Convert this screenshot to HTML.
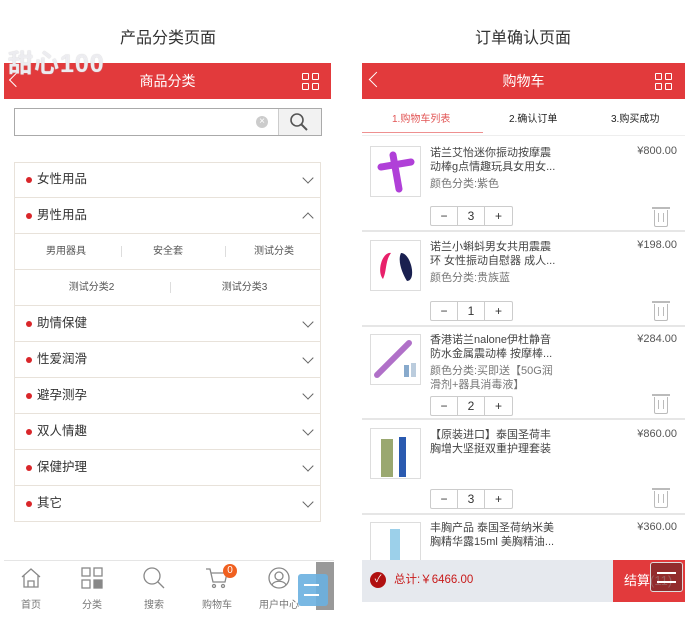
<!DOCTYPE html>
<html><head><meta charset="utf-8"><style>
*{margin:0;padding:0;box-sizing:border-box}
body{width:690px;height:637px;background:#fff;position:relative;overflow:hidden;font-family:"Liberation Sans","Noto Sans CJK SC",sans-serif;color:#333}
.a{position:absolute}
.title{font-size:16px;color:#333;top:24px}
.bar{background:#e23a3c;height:36px;top:63px;color:#fff;font-size:14px;text-align:center;line-height:36px}
.grid{position:absolute;width:17px;height:17px;top:10px}
.grid i{position:absolute;width:7px;height:7px;border:1.5px solid #fff;border-radius:1px}
.row{position:absolute;left:14px;width:307px;height:36px;border:1px solid #e8e2da;border-top:none;font-size:12.5px;line-height:35px;padding-left:22px;color:#333}
.row:before{content:"";position:absolute;left:11px;top:15px;width:6px;height:6px;border-radius:50%;background:#d9262a}
.chev{position:absolute;right:8px;top:12px;width:8px;height:8px;border-right:1.3px solid #666;border-bottom:1.3px solid #666;transform:rotate(45deg)}
.sub{position:absolute;left:14px;width:307px;height:36px;border:1px solid #e8e2da;border-top:none;font-size:10px;color:#555;line-height:35px}
.sub span{position:absolute;text-align:center}
.sep{position:absolute;top:12px;width:1px;height:11px;background:#ddd}
.nav{position:absolute;top:596px;font-size:10px;color:#777;text-align:center;width:40px}
.it{position:absolute;left:430px;font-size:11px;line-height:14px;color:#444;white-space:nowrap}
.clr{color:#777}
.pr{position:absolute;right:13px;font-size:11px;color:#555}
.img{position:absolute;left:370px;width:51px;height:51px;border:1px solid #ddd;background:#fff}
.qty{position:absolute;left:430px;width:83px;height:20px;border:1px solid #ccc;border-radius:2px;font-size:12px}
.qty span{position:absolute;top:0;height:18px;line-height:18px;text-align:center;width:27px}
.qty .m{left:0;border-right:1px solid #ccc}.qty .n{left:27px;border-right:1px solid #ccc}.qty .p{left:54px}
.hr{position:absolute;left:362px;width:323px;height:2px;background:#e6e6e6}
.tr{position:absolute;left:654px;width:14px;height:17px;border:1.3px solid #bbb;border-top:none;border-radius:0 0 2px 2px}
.tr:before{content:"";position:absolute;left:-3px;top:-3px;width:18px;height:2px;background:#bbb}
.tr:after{content:"";position:absolute;left:3px;top:3px;width:4px;height:9px;border-left:1px solid #bbb;border-right:1px solid #bbb}
</style></head><body>
<!-- LEFT -->
<div class="a title" style="left:120px">产品分类页面</div>
<div class="a bar" style="left:4px;width:327px">商品分类
<div class="a" style="left:7px;top:12px;width:10px;height:10px;border-left:1.3px solid #fff;border-bottom:1.3px solid #fff;transform:rotate(45deg)"></div>
<div class="grid" style="left:298px"><i style="left:0;top:0"></i><i style="left:10px;top:0"></i><i style="left:0;top:10px"></i><i style="left:10px;top:10px"></i></div></div>
<div class="a" style="left:8px;top:49px;font-size:25px;font-weight:bold;color:rgba(242,242,246,0.9);text-shadow:0 0 1px #bbb;letter-spacing:1px;line-height:30px">甜心100</div>
<div class="a" style="left:14px;top:108px;width:308px;height:28px;border:1px solid #aaa;background:#fff"></div>
<div class="a" style="left:278px;top:109px;width:43px;height:26px;background:#f2f2f2;border-left:1px solid #ccc"></div>
<div class="a" style="left:256px;top:116px;width:12px;height:12px;border-radius:50%;background:#ccc;color:#fff;font-size:10px;line-height:12px;text-align:center">×</div>
<svg class="a" style="left:289px;top:112px" width="20" height="20" viewBox="0 0 20 20"><circle cx="8" cy="8" r="6" fill="none" stroke="#555" stroke-width="1.6"/><path d="M12.5 12.5 L18 18" stroke="#555" stroke-width="2"/></svg>
<div class="a" style="left:14px;top:162px;width:307px;height:1px;background:#e8e2da"></div>
<div class="row" style="top:162px">女性用品<i class="chev"></i></div>
<div class="row" style="top:198px">男性用品<i class="chev" style="transform:rotate(225deg);top:16px"></i></div>
<div class="sub" style="top:234px"><span style="left:0;width:102px">男用器具</span><i class="sep" style="left:106px"></i><span style="left:102px;width:102px">安全套</span><i class="sep" style="left:210px"></i><span style="left:204px;width:110px">测试分类</span></div>
<div class="sub" style="top:270px"><span style="left:0;width:153px">测试分类2</span><i class="sep" style="left:155px"></i><span style="left:153px;width:153px">测试分类3</span></div>
<div class="row" style="top:306px">助情保健<i class="chev"></i></div>
<div class="row" style="top:342px">性爱润滑<i class="chev"></i></div>
<div class="row" style="top:378px">避孕测孕<i class="chev"></i></div>
<div class="row" style="top:414px">双人情趣<i class="chev"></i></div>
<div class="row" style="top:450px">保健护理<i class="chev"></i></div>
<div class="row" style="top:486px">其它<i class="chev"></i></div>
<div class="a" style="left:4px;top:560px;width:330px;height:1px;background:#e5e5e5"></div>
<svg class="a" style="left:20px;top:567px" width="22" height="22" viewBox="0 0 22 22" fill="none" stroke="#888" stroke-width="1.3"><path d="M2 10 L11 2 L20 10 M4 8 V20 H18 V8 M8 20 V14 H14 V20"/></svg>
<svg class="a" style="left:81px;top:567px" width="22" height="22" viewBox="0 0 22 22" fill="none" stroke="#888" stroke-width="1.3"><rect x="1" y="1" width="8" height="8"/><rect x="13" y="1" width="8" height="8"/><rect x="1" y="13" width="8" height="8"/><rect x="13" y="13" width="8" height="8" fill="#888"/></svg>
<svg class="a" style="left:143px;top:567px" width="22" height="22" viewBox="0 0 22 22" fill="none" stroke="#888" stroke-width="1.3"><circle cx="9" cy="9" r="8"/><path d="M15 15 L21 21"/></svg>
<svg class="a" style="left:205px;top:567px" width="24" height="22" viewBox="0 0 24 22" fill="none" stroke="#888" stroke-width="1.3"><path d="M1 2 H5 L8 15 H20 L22 6 H6"/><circle cx="9" cy="19" r="1.5"/><circle cx="18" cy="19" r="1.5"/></svg>
<div class="a" style="left:223px;top:564px;width:14px;height:14px;border-radius:50%;background:#f06020;color:#fff;font-size:10px;line-height:14px;text-align:center">0</div>
<svg class="a" style="left:268px;top:567px" width="22" height="22" viewBox="0 0 22 22" fill="none" stroke="#888" stroke-width="1.3"><circle cx="11" cy="11" r="10"/><circle cx="11" cy="9" r="4"/><path d="M4 18 C6 13 16 13 18 18"/></svg>
<div class="nav" style="left:11px">首页</div><div class="nav" style="left:72px">分类</div><div class="nav" style="left:134px">搜索</div><div class="nav" style="left:197px">购物车</div><div class="nav" style="left:254px;width:50px">用户中心</div>
<div class="a" style="left:316px;top:562px;width:18px;height:48px;background:#999"></div>
<div class="a" style="left:298px;top:574px;width:30px;height:32px;background:#6ab0e0;border-radius:3px;opacity:.9"></div>
<div class="a" style="left:304px;top:584px;width:15px;height:2px;background:#fff"></div>
<div class="a" style="left:304px;top:594px;width:15px;height:2px;background:#fff"></div>
<!-- RIGHT -->
<div class="a title" style="left:475px">订单确认页面</div>
<div class="a bar" style="left:362px;width:323px">购物车
<div class="a" style="left:9px;top:11px;width:11px;height:11px;border-left:1.3px solid #fff;border-bottom:1.3px solid #fff;transform:rotate(45deg)"></div>
<div class="grid" style="left:293px"><i style="left:0;top:0"></i><i style="left:10px;top:0"></i><i style="left:0;top:10px"></i><i style="left:10px;top:10px"></i></div></div>
<div class="a" style="left:392px;top:110px;font-size:10px;color:#e25555">1.购物车列表</div>
<div class="a" style="left:509px;top:110px;font-size:10px;color:#222">2.确认订单</div>
<div class="a" style="left:611px;top:110px;font-size:10px;color:#222">3.购买成功</div>
<div class="a" style="left:362px;top:132px;width:121px;height:1px;background:#ee9090"></div>
<div class="a" style="left:362px;top:135px;width:323px;height:1px;background:#eee"></div>
<!-- item1 -->
<div class="img" style="top:146px"><svg width="49" height="49"><path d="M10 20 L40 15 M22 8 L28 42" stroke="#b040d8" stroke-width="7" stroke-linecap="round"/></svg></div>
<div class="it" style="top:146px">诺兰艾怡迷你振动按摩震<br>动棒g点情趣玩具女用女...<br><span class="clr" style="line-height:20px">颜色分类:紫色</span></div>
<div class="pr" style="top:145px">¥800.00</div>
<div class="qty" style="top:206px"><span class="m">−</span><span class="n">3</span><span class="p">+</span></div>
<div class="tr" style="top:210px"></div>
<div class="hr" style="top:230px"></div>
<!-- item2 -->
<div class="img" style="top:240px"><svg width="49" height="49"><path d="M12 38 C5 30 12 10 20 12 C14 20 16 30 12 38Z" fill="#e8206a"/><path d="M30 12 C40 12 46 40 36 40 C32 34 26 20 30 12Z" fill="#1a2050"/></svg></div>
<div class="it" style="top:240px">诺兰小蝌蚪男女共用震震<br>环 女性振动自慰器 成人...<br><span class="clr" style="line-height:20px">颜色分类:贵族蓝</span></div>
<div class="pr" style="top:239px">¥198.00</div>
<div class="qty" style="top:301px"><span class="m">−</span><span class="n">1</span><span class="p">+</span></div>
<div class="tr" style="top:304px"></div>
<div class="hr" style="top:325px"></div>
<!-- item3 -->
<div class="img" style="top:334px"><svg width="49" height="49"><path d="M6 40 L38 8" stroke="#b070c8" stroke-width="6" stroke-linecap="round"/><rect x="33" y="30" width="5" height="12" fill="#8ac"/><rect x="40" y="28" width="5" height="14" fill="#bcd"/></svg></div>
<div class="it" style="top:333px">香港诺兰nalone伊杜静音<br>防水金属震动棒 按摩棒...<br><span class="clr" style="display:inline-block;margin-top:3px">颜色分类:买即送【50G润<br>滑剂+器具消毒液】</span></div>
<div class="pr" style="top:333px">¥284.00</div>
<div class="qty" style="top:396px"><span class="m">−</span><span class="n">2</span><span class="p">+</span></div>
<div class="tr" style="top:397px"></div>
<div class="hr" style="top:418px"></div>
<!-- item4 -->
<div class="img" style="top:428px"><svg width="49" height="49"><rect x="10" y="10" width="12" height="38" fill="#9aa870"/><rect x="28" y="8" width="7" height="40" fill="#2a5ab0"/></svg></div>
<div class="it" style="top:428px">【原装进口】泰国圣荷丰<br>胸增大坚挺双重护理套装</div>
<div class="pr" style="top:428px">¥860.00</div>
<div class="qty" style="top:489px"><span class="m">−</span><span class="n">3</span><span class="p">+</span></div>
<div class="tr" style="top:491px"></div>
<div class="hr" style="top:513px"></div>
<!-- item5 -->
<div class="img" style="top:522px;height:45px"><svg width="49" height="45"><rect x="19" y="6" width="10" height="40" fill="#9cd0ea"/></svg></div>
<div class="it" style="top:521px">丰胸产品 泰国圣荷纳米美<br>胸精华露15ml 美胸精油...</div>
<div class="pr" style="top:521px">¥360.00</div>
<!-- bottom bar -->
<div class="a" style="left:362px;top:560px;width:251px;height:42px;background:#e6e9ee"></div>
<div class="a" style="left:370px;top:572px;width:16px;height:16px;border-radius:50%;background:#b01010;color:#fff;font-size:10px;line-height:16px;text-align:center">✓</div>
<div class="a" style="left:394px;top:571px;font-size:11.5px;color:#c81a1a">总计:￥6466.00</div>
<div class="a" style="left:613px;top:560px;width:72px;height:42px;background:#e23a3c;color:#fff;font-size:13px;line-height:42px;padding-left:11px">结算(11)</div>
<div class="a" style="left:650px;top:562px;width:33px;height:30px;border:1px solid #ddd;border-radius:3px;background:rgba(120,40,40,.75)"></div>
<div class="a" style="left:657px;top:572px;width:19px;height:2px;background:#fff"></div>
<div class="a" style="left:657px;top:581px;width:19px;height:2px;background:#fff"></div>
</body></html>
